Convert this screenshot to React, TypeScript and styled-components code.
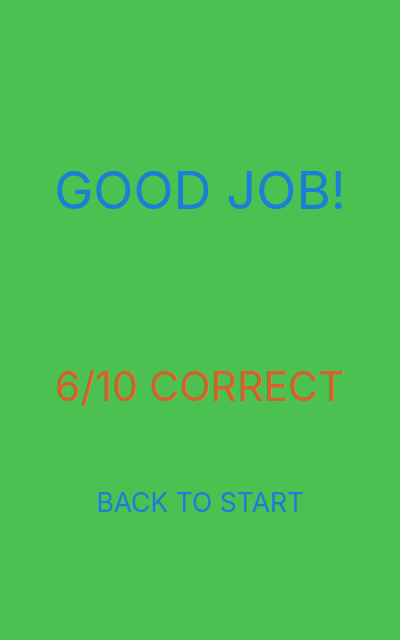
import React from "react";
import styled, { createGlobalStyle } from "styled-components";

const Global = createGlobalStyle`
  html, body { margin: 0; padding: 0; background: #4BC152; }
  #root { height: 640px; }
`;

const Screen = styled.div`
  width: 400px;
  height: 640px;
  background: #4BC152;
  display: flex;
  flex-direction: column;
  align-items: center;
  font-family: Inter, "Noto Sans", sans-serif;
`;

const Title = styled.h1`
  margin: 160px 0 0;
  font-size: 52.5px;
  font-weight: 400;
  line-height: 60px;
  color: #1C7ED6;
`;

const Score = styled.div`
  margin-top: 142px;
  font-size: 41px;
  line-height: 48px;
  color: #D7612B;
`;

const BackButton = styled.button`
  margin-top: 76px;
  background: none;
  border: none;
  padding: 0;
  font-family: inherit;
  font-size: 26.5px;
  line-height: 32px;
  color: #1C7ED6;
  cursor: pointer;
`;

export default function App() {
  return (
    <>
      <Global />
      <Screen>
        <Title>GOOD JOB!</Title>
        <Score>6/10 CORRECT</Score>
        <BackButton>BACK TO START</BackButton>
      </Screen>
    </>
  );
}
